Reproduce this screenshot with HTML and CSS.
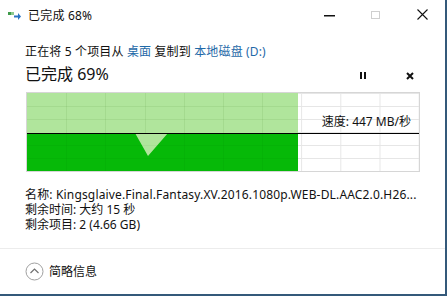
FILE: index.html
```html
<!DOCTYPE html>
<html lang="zh-CN">
<head>
<meta charset="utf-8">
<link rel="stylesheet" href="styles.css">
</head>
<body>
<div class="window">
  <div class="titlebar">
    <svg class="app-icon" width="13" height="9" viewBox="0 0 13 9">
      <rect x="0" y="1" width="3" height="3" fill="#3f9a4a"/>
      <rect x="3" y="1" width="3" height="3" fill="#8cc98f"/>
      <path d="M6 4.5 H10 V2 L13 5.5 L10 9 V6.5 H6 Z" fill="#2a73c4"/>
    </svg>
    <span class="title">已完成 68%</span>
    <div class="controls">
      <span class="ctl ctl-min"><svg width="11" height="2" viewBox="0 0 11 2"><rect width="11" height="1.5" fill="#111"/></svg></span>
      <span class="ctl ctl-max"><svg width="9" height="8" viewBox="0 0 9 8"><rect x="0.5" y="0.5" width="8" height="7" fill="none" stroke="#cfcfcf"/></svg></span>
      <span class="ctl ctl-close"><svg width="11" height="11" viewBox="0 0 11 11"><path d="M0.5 0.5 L10.5 10.5 M10.5 0.5 L0.5 10.5" stroke="#111" stroke-width="1.1"/></svg></span>
    </div>
  </div>
  <div class="content">
    <div class="line1">正在将 5 个项目从 <span class="link">桌面</span> 复制到 <span class="link">本地磁盘 (D:)</span></div>
    <div class="status-row">
      <span class="pct">已完成 69%</span>
      <div class="actions">
        <span class="act act-pause"><svg width="6" height="7" viewBox="0 0 6 7"><rect x="0" y="0" width="2" height="7" fill="#111"/><rect x="4" y="0" width="2" height="7" fill="#111"/></svg></span>
        <span class="act act-stop"><svg width="8" height="8" viewBox="0 0 8 8"><path d="M1 1 L7 7 M7 1 L1 7" stroke="#111" stroke-width="2"/></svg></span>
      </div>
    </div>
    <div class="graph">
      <svg width="392" height="78" viewBox="0 0 392 78">
        <rect x="0" y="0" width="271" height="78" fill="#b0e59c"/>
        <g stroke="rgba(40,110,20,0.09)" stroke-width="1">
          <line x1="39.5" y1="0" x2="39.5" y2="40"/>
          <line x1="78.5" y1="0" x2="78.5" y2="40"/>
          <line x1="118.5" y1="0" x2="118.5" y2="40"/>
          <line x1="157.5" y1="0" x2="157.5" y2="40"/>
          <line x1="196.5" y1="0" x2="196.5" y2="40"/>
          <line x1="235.5" y1="0" x2="235.5" y2="40"/>
          <line x1="0" y1="13.5" x2="271" y2="13.5"/>
          <line x1="0" y1="26.5" x2="271" y2="26.5"/>
        </g>
        <polygon points="0,40 108,40 121,63 141,40 271,40 271,78 0,78" fill="#06b908"/>
        <g stroke="rgba(0,60,0,0.04)" stroke-width="1">
          <line x1="39.5" y1="41" x2="39.5" y2="78"/>
          <line x1="78.5" y1="41" x2="78.5" y2="78"/>
          <line x1="157.5" y1="41" x2="157.5" y2="78"/>
          <line x1="196.5" y1="41" x2="196.5" y2="78"/>
          <line x1="235.5" y1="41" x2="235.5" y2="78"/>
          <line x1="0" y1="52.5" x2="271" y2="52.5"/>
          <line x1="0" y1="65.5" x2="271" y2="65.5"/>
        </g>
        <line x1="0" y1="40.5" x2="392" y2="40.5" stroke="#000" stroke-width="1.2"/>
      </svg>
      <span class="speed">速度: 447 MB/秒</span>
    </div>
    <div class="info">
      <div class="info-line info-name">名称: Kingsglaive.Final.Fantasy.XV.2016.1080p.WEB-DL.AAC2.0.H26...</div>
      <div class="info-line">剩余时间: 大约 15 秒</div>
      <div class="info-line">剩余项目: 2 (4.66 GB)</div>
    </div>
  </div>
  <div class="footer">
    <svg class="chev" width="19" height="19" viewBox="0 0 19 19">
      <circle cx="9.5" cy="9.5" r="8.5" fill="#fff" stroke="#a0a0a0" stroke-width="1"/>
      <path d="M5.5 11 L9.5 7 L13.5 11" fill="none" stroke="#707070" stroke-width="1.2"/>
    </svg>
    <span class="footer-text">简略信息</span>
  </div>
</div>
</body>
</html>
```
FILE: styles.css
```css
html, body {
  margin: 0;
  padding: 0;
  background: #ffffff;
}
body {
  font-family: "Noto Sans", "Noto Sans CJK SC", sans-serif;
  color: #111;
  font-size: 12px;
}
.window {
  width: 445px;
  height: 294px;
  border-right: 2px solid #34597a;
  border-bottom: 2px solid #34597a;
  background: #fff;
  display: flex;
  flex-direction: column;
  overflow: hidden;
}
.titlebar {
  height: 30px;
  display: flex;
  align-items: center;
  padding-left: 8px;
  flex: none;
}
.app-icon {
  margin-right: 7px;
  margin-top: 1px;
}
.title {
  font-size: 12px;
  line-height: 16px;
  margin-top: 1px;
  letter-spacing: 0.2px;
}
.controls {
  margin-left: auto;
  display: flex;
  align-items: center;
  height: 30px;
}
.ctl {
  display: flex;
  align-items: center;
  justify-content: center;
}
.ctl-min {
  width: 11px;
  margin-right: 36px;
  margin-top: 1px;
}
.ctl-max {
  width: 9px;
  margin-right: 37px;
  margin-top: -1px;
}
.ctl-close {
  width: 11px;
  margin-right: 17px;
  margin-top: -1px;
}
.content {
  padding: 13px 0 0 25px;
  flex: 1;
}
.line1 {
  line-height: 18px;
  font-size: 12px;
  letter-spacing: 0.15px;
}
.link {
  color: #1f6aa8;
}
.status-row {
  display: flex;
  align-items: center;
  height: 22px;
  margin-top: 2px;
}
.pct {
  font-size: 16px;
  line-height: 22px;
}
.actions {
  margin-left: auto;
  display: flex;
  align-items: center;
  margin-right: 31px;
  margin-top: 3px;
}
.act {
  display: flex;
}
.act-pause {
  margin-right: 40px;
}
.graph {
  position: relative;
  width: 392px;
  height: 78px;
  border: 1px solid #d6d6d6;
  margin-top: 7px;
  margin-left: 1px;
  background-color: #fff;
  background-image:
    linear-gradient(to right, #e6e6e6 1px, transparent 1px),
    linear-gradient(to bottom, #e6e6e6 1px, transparent 1px);
  background-size: 39.2px 78px, 392px 13px;
  background-position: 39px 0, 0 13px;
}
.graph svg {
  display: block;
}
.speed {
  position: absolute;
  right: 8px;
  top: 21px;
  line-height: 16px;
  font-size: 12px;
  color: #111;
}
.info {
  margin-top: 15px;
}
.info-line {
  line-height: 15px;
  font-size: 12px;
  white-space: nowrap;
}
.info-name {
  letter-spacing: 0.16px;
}
.footer {
  flex: none;
  height: 45px;
  border-top: 1px solid #ececec;
  display: flex;
  align-items: center;
  padding-left: 25px;
}
.chev {
  margin-right: 5px;
}
.footer-text {
  font-size: 12px;
  line-height: 16px;
}
```
